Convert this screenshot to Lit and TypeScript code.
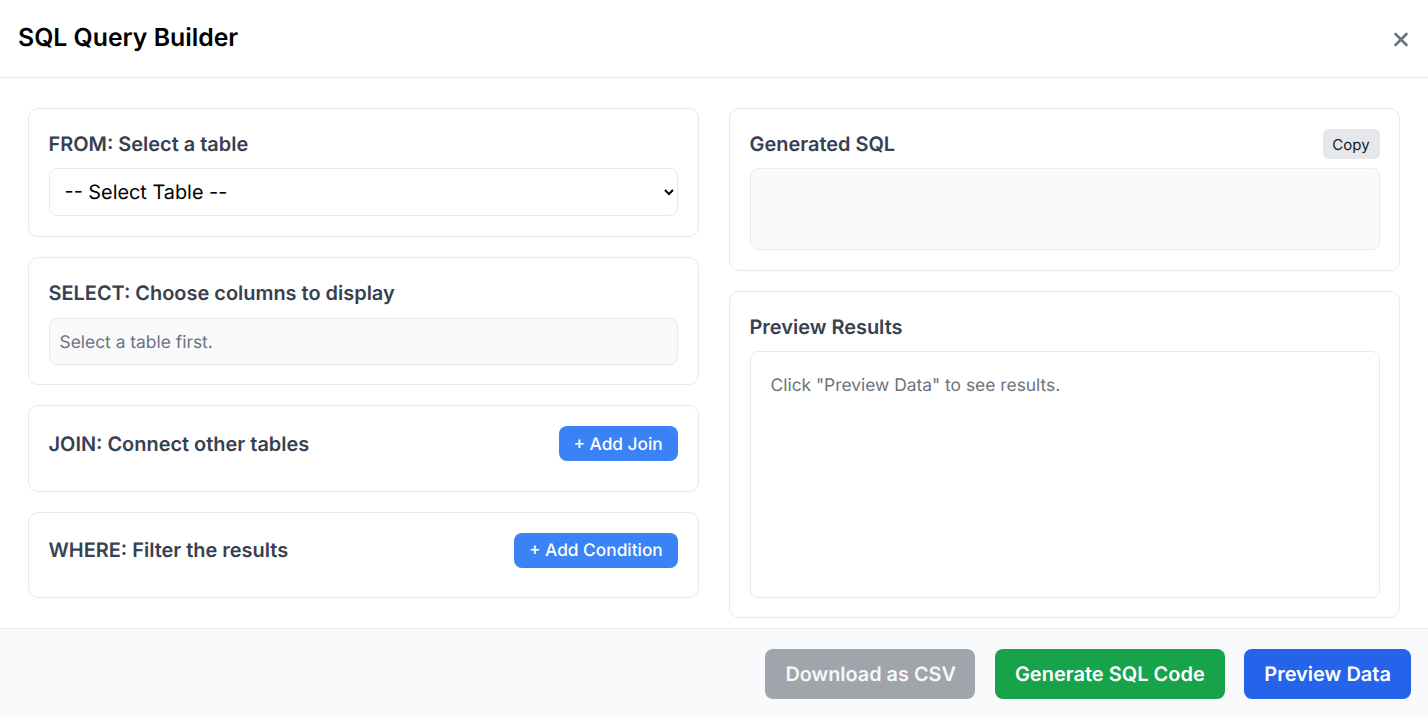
import { LitElement, html, css } from "lit";
import { customElement } from "lit/decorators.js";

@customElement("app-root")
export class AppRoot extends LitElement {
  static styles = css`
    :host { display: flex; flex-direction: column; width: 1428px; height: 717px; overflow: hidden; background: #fff; font-family: Inter, "Liberation Sans", sans-serif; color: #000; text-rendering: geometricPrecision; }
    * { box-sizing: border-box; }
    button, select { text-rendering: geometricPrecision; }
    .head { height: 78px; flex: none; border-bottom: 1px solid #e8eaed; display: flex; align-items: center; justify-content: space-between; padding: 0 17px 0 18px; }
    h1 { margin: 0; font-size: 24.8px; font-weight: 600; line-height: 32px; position: relative; top: -2px; }
    .close { width: 20px; height: 20px; color: #6b7280; display: flex; }
    .body { flex: 1; min-height: 0; display: grid; grid-template-columns: 671.5px 671.5px; gap: 29.5px; padding: 30px 0 0 27.75px; align-items: start; }
    .col { display: flex; flex-direction: column; gap: 20px; }
    .card { border: 1px solid #e8eaed; border-radius: 10px; padding: 20px 19.75px; background: #fff; }
    .col.left .card { padding-right: 20.5px; }
    .row { display: flex; align-items: center; justify-content: space-between; height: 30px; margin-bottom: 9px; }
    .row.action { height: 35px; margin-bottom: 9.5px; }
    h2 { margin: 0; font-size: 19.95px; line-height: 30px; font-weight: 600; color: #374151; }
    select { display: block; width: 100%; height: 48px; border: 1px solid #e8eaed; border-radius: 8px; background: #fff; color: #000; font: 400 19.85px Inter, sans-serif; padding: 0 11px; }
    .col.left .card.sel { padding-bottom: 19.5px; }
    .hint { height: 46.5px; border: 1px solid #e8eaed; border-radius: 8px; background: #f9fafc; color: #6b7280; font-size: 17.4px; display: flex; align-items: center; padding: 1.5px 10px 0; margin-top: 10px; }
    .add { border: 0; border-radius: 8px; height: 35px; padding: 1.5px 15px 0 14.5px; background: #3b82f6; color: #fff; font: 500 17.3px Inter, sans-serif; }
    .copy { border: 0; border-radius: 6px; width: 57px; height: 30px; padding: 0; background: #e5e7eb; color: #111827; font: 400 15px Inter, sans-serif; }
    .sql { height: 82px; border: 1px solid #e8eaed; border-radius: 8px; background: #f9fafc; }
    .results { height: 246.5px; border: 1px solid #e8eaed; border-radius: 8px; padding: 20.5px 20px; color: #6b7280; font-size: 17.4px; line-height: 26px; }
    .card.res { padding-bottom: 19.5px; }
    .foot { height: 89px; flex: none; border-top: 1px solid #e8eaed; background: #f9fafc; display: flex; align-items: center; justify-content: flex-end; gap: 19.5px; padding: 2px 17px 0 0; }
    .foot button { border: 0; border-radius: 8px; height: 50px; padding: 0 20px; color: #fff; font: 600 20px Inter, sans-serif; }
    .foot .gray { background: #a0a4ab; color: #f7f7f8; padding: 0 19.5px 0 20px; font-size: 19.85px; }
    .green { background: #16a34a; }
    .blue { background: #2563eb; }
  `;

  render() {
    return html`
      <header class="head">
        <h1>SQL Query Builder</h1>
        <span class="close"><svg viewBox="0 0 20 20" width="20" height="20" fill="none" stroke="currentColor" stroke-width="2.6" stroke-linecap="round"><path d="M4.5 5 15.5 16M15.5 5 4.5 16"/></svg></span>
      </header>
      <main class="body">
        <div class="col left">
          <section class="card">
            <div class="row"><h2>FROM: Select a table</h2></div>
            <select><option>-- Select Table --</option></select>
          </section>
          <section class="card sel">
            <h2>SELECT: Choose columns to display</h2>
            <div class="hint">Select a table first.</div>
          </section>
          <section class="card">
            <div class="row action"><h2>JOIN: Connect other tables</h2><button class="add">+ Add Join</button></div>
          </section>
          <section class="card">
            <div class="row action"><h2>WHERE: Filter the results</h2><button class="add">+ Add Condition</button></div>
          </section>
        </div>
        <div class="col">
          <section class="card">
            <div class="row"><h2>Generated SQL</h2><button class="copy">Copy</button></div>
            <div class="sql"></div>
          </section>
          <section class="card res">
            <div class="row"><h2>Preview Results</h2></div>
            <div class="results">Click "Preview Data" to see results.</div>
          </section>
        </div>
      </main>
      <footer class="foot">
        <button class="gray">Download as CSV</button>
        <button class="green">Generate SQL Code</button>
        <button class="blue">Preview Data</button>
      </footer>
    `;
  }
}
